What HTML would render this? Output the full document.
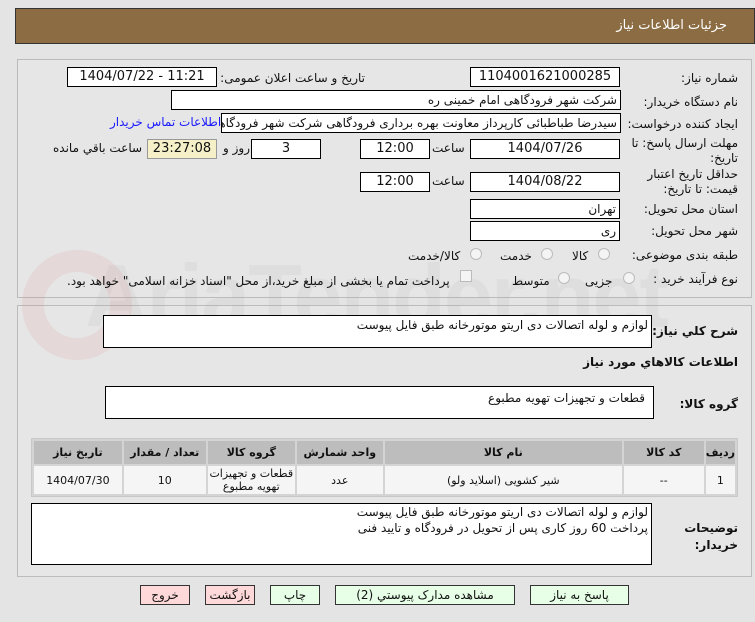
<!DOCTYPE html>
<html><head><meta charset="utf-8"><style>
*{box-sizing:border-box;margin:0;padding:0}
body{width:755px;height:622px;background:#e4e4e4;font-family:"DejaVu Sans",sans-serif;font-size:11px;color:#111;position:relative;overflow:hidden}
.a{position:absolute}
.box{position:absolute;background:#fff;border:1px solid #000;height:20px;line-height:18px;padding:0 3px;white-space:nowrap;overflow:hidden}
.c{text-align:center}.r{text-align:right;direction:rtl}
.l{position:absolute;direction:rtl;text-align:right;white-space:nowrap}
.rad{position:absolute;width:12px;height:12px;border-radius:50%;border:1px solid #bbb;background:#f4f4f4}
table{border-collapse:separate;border-spacing:2px;background:#d4d4d4;border:1px solid #c8c8c8}
th{background:#bdbdbd;font-weight:bold;height:23px}
td{background:#f5f5f5;height:28px;text-align:center}
.btn{position:absolute;top:585px;height:20px;border:1px solid #333;text-align:center;line-height:18px;font-size:12px;direction:rtl}
</style></head><body>
<div class="a" style="left:15px;top:8px;width:740px;height:36px;background:#8c6d43;border:1px solid #333"></div>
<div class="l" style="right:28px;top:18px;color:#fff;font-size:13px">جزئیات اطلاعات نیاز</div>
<div class="a" style="left:17px;top:59px;width:735px;height:239px;border:1px solid #bbb;background:#e6e6e6"></div>
<div class="a" style="left:17px;top:305px;width:735px;height:272px;border:1px solid #bbb;background:#e6e6e6"></div>
<div class="a" style="left:85px;top:245px;font-size:88px;font-weight:bold;color:rgba(170,170,170,.13);letter-spacing:-2px;font-family:'Liberation Sans',sans-serif">AriaTender.net</div>
<div class="a" style="left:22px;top:250px;width:110px;height:110px;border:22px solid rgba(220,120,120,.13);border-radius:50%"></div>

<div class="l" style="right:17px;top:71px;font-size:12px">شماره نیاز:</div>
<div class="box c" style="left:470px;top:67px;width:150px;font-size:13px">1104001621000285</div>
<div class="l" style="right:390px;top:71px;font-size:12px">تاریخ و ساعت اعلان عمومی:</div>
<div class="box c" style="left:67px;top:67px;width:150px;font-size:13px">1404/07/22 - 11:21</div>

<div class="l" style="right:17px;top:95px;font-size:12px">نام دستگاه خریدار:</div>
<div class="box r" style="left:171px;top:90px;width:450px;font-size:12px">شرکت شهر فرودگاهی امام خمینی  ره</div>

<div class="l" style="right:17px;top:117px;font-size:12px">ایجاد کننده درخواست:</div>
<div class="box r" style="left:221px;top:113px;width:400px;font-size:12px">سیدرضا طباطبائی کارپرداز معاونت بهره برداری فرودگاهی شرکت شهر فرودگاهی</div>
<div class="l" style="left:110px;top:115px;color:#1a1aff;font-size:12px">اطلاعات تماس خریدار</div>

<div class="l" style="right:17px;top:136px;font-size:12px;line-height:15px">مهلت ارسال پاسخ: تا<br>تاریخ:</div>
<div class="box c" style="left:470px;top:139px;width:150px;font-size:13px">1404/07/26</div>
<div class="l" style="left:432px;top:141px;font-size:12px">ساعت</div>
<div class="box c" style="left:360px;top:139px;width:70px;font-size:13px">12:00</div>
<div class="box c" style="left:251px;top:139px;width:70px;font-size:13px">3</div>
<div class="l" style="left:223px;top:141px;font-size:12px">روز و</div>
<div class="box c" style="left:147px;top:139px;width:70px;font-size:13px;background:#f5f0c8;border-color:#999">23:27:08</div>
<div class="l" style="left:53px;top:141px;font-size:12px">ساعت باقي مانده</div>

<div class="l" style="right:17px;top:167px;font-size:12px;line-height:15px">حداقل تاریخ اعتبار<br>قیمت: تا تاریخ:</div>
<div class="box c" style="left:470px;top:172px;width:150px;font-size:13px">1404/08/22</div>
<div class="l" style="left:432px;top:174px;font-size:12px">ساعت</div>
<div class="box c" style="left:360px;top:172px;width:70px;font-size:13px">12:00</div>

<div class="l" style="right:17px;top:202px;font-size:12px">استان محل تحویل:</div>
<div class="box r" style="left:470px;top:199px;width:150px;font-size:12px">تهران</div>
<div class="l" style="right:17px;top:224px;font-size:12px">شهر محل تحویل:</div>
<div class="box r" style="left:470px;top:221px;width:150px;font-size:12px">ری</div>

<div class="l" style="right:17px;top:248px;font-size:12px">طبقه بندی موضوعی:</div>
<div class="rad" style="left:598px;top:248px"></div><div class="l" style="left:572px;top:249px;font-size:12px">کالا</div>
<div class="rad" style="left:541px;top:248px"></div><div class="l" style="left:500px;top:249px;font-size:12px">خدمت</div>
<div class="rad" style="left:470px;top:248px"></div><div class="l" style="left:408px;top:249px;font-size:12px">کالا/خدمت</div>

<div class="l" style="right:17px;top:272px;font-size:12px">نوع فرآیند خرید :</div>
<div class="rad" style="left:623px;top:272px"></div><div class="l" style="left:585px;top:274px;font-size:12px">جزیی</div>
<div class="rad" style="left:558px;top:272px"></div><div class="l" style="left:512px;top:274px;font-size:12px">متوسط</div>
<div class="a" style="left:460px;top:270px;width:12px;height:12px;border:1px solid #bbb;background:#f4f4f4"></div>
<div class="l" style="left:67px;top:274px;font-size:12px">پرداخت تمام یا بخشی از مبلغ خرید،از محل "اسناد خزانه اسلامی" خواهد بود.</div>

<div class="l" style="right:17px;top:324px;font-size:12px;font-weight:bold">شرح کلي نیاز:</div>
<div class="box r" style="left:103px;top:315px;width:549px;height:33px;font-size:12px">لوازم و لوله اتصالات دی اریتو موتورخانه طبق فایل پیوست</div>
<div class="l" style="right:17px;top:355px;font-size:12px;font-weight:bold">اطلاعات کالاهاي مورد نیاز</div>
<div class="l" style="right:17px;top:397px;font-size:12px;font-weight:bold">گروه کالا:</div>
<div class="box r" style="left:105px;top:386px;width:549px;height:33px;font-size:12px;padding-right:8px;padding-top:2px">قطعات و تجهیزات تهویه مطبوع</div>

<table class="a" style="left:31px;top:438px;width:707px;direction:rtl;font-size:11px">
<tr><th style="width:27px">ردیف</th><th style="width:80px">کد کالا</th><th style="width:237px">نام کالا</th><th style="width:86px">واحد شمارش</th><th style="width:87px">گروه کالا</th><th style="width:82px">تعداد / مقدار</th><th>تاریخ نیاز</th></tr>
<tr><td>1</td><td>--</td><td>شیر کشویی (اسلاید ولو)</td><td>عدد</td><td style="line-height:13px">قطعات و تجهیزات<br>تهویه مطبوع</td><td>10</td><td>1404/07/30</td></tr>
</table>

<div class="l" style="right:17px;top:520px;font-size:12px;font-weight:bold;line-height:17px">توضیحات<br>خریدار:</div>
<div class="box r" style="left:31px;top:503px;width:621px;height:62px;font-size:12px;line-height:16px;white-space:normal">لوازم و لوله اتصالات دی اریتو موتورخانه طبق فایل پیوست<br>پرداخت 60 روز کاری پس از تحویل در فرودگاه و تایید فنی</div>

<div class="btn" style="left:530px;width:99px;background:#e6ffe6">پاسخ به نیاز</div>
<div class="btn" style="left:335px;width:180px;background:#e6ffe6">مشاهده مدارک پیوستي (2)</div>
<div class="btn" style="left:270px;width:50px;background:#e6ffe6">چاپ</div>
<div class="btn" style="left:205px;width:50px;background:#ffd9d9">بازگشت</div>
<div class="btn" style="left:140px;width:50px;background:#ffd9d9">خروج</div>
</body></html>
